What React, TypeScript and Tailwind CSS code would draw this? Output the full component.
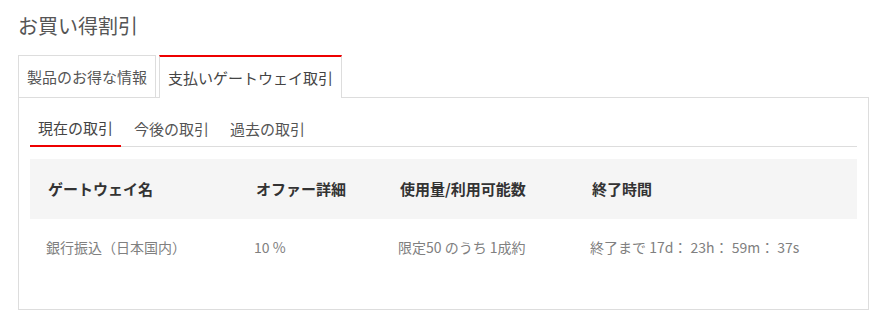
const font = { fontFamily: '"Noto Sans CJK JP", "Noto Sans", sans-serif' }

const columns = ['ゲートウェイ名', 'オファー詳細', '使用量/利用可能数', '終了時間']

const rows = [
  ['銀行振込（日本国内）', '10 %', '限定50 のうち 1成約', '終了まで 17d： 23h： 59m： 37s'],
]

export default function App() {
  return (
    <div className="h-[327px] w-[885px] bg-white pl-[18px] pr-[16px] pt-3" style={font}>
      {/* Page title */}
      <h1 className="text-[20px] leading-[28px] text-[#555]">お買い得割引</h1>

      {/* Outer tabs */}
      <div className="mt-[15px] flex">
        <button className="mr-[3px] h-[42px] border border-b-0 border-[#ddd] px-2 text-[15px] leading-[20px] text-[#555]">
          製品のお得な情報
        </button>
        <button className="relative -mb-px h-[43px] border border-t-2 border-b-0 border-[#ddd] border-t-[#e00] bg-white px-2 text-[15px] leading-[20px] text-[#444]">
          支払いゲートウェイ取引
        </button>
      </div>

      {/* Panel */}
      <div className="h-[213px] border border-[#ddd] px-[11px] pt-[13px]">
        {/* Inner tabs */}
        <div className="flex gap-[5px] border-b border-[#ddd]">
          <button className="-mb-px border-b-2 border-[#e00] px-2 py-[7px] text-[15px] leading-[20px] text-[#444]">
            現在の取引
          </button>
          <button className="-mb-px px-2 py-[7px] text-[15px] leading-[20px] text-[#555]">今後の取引</button>
          <button className="-mb-px px-2 py-[7px] text-[15px] leading-[20px] text-[#555]">過去の取引</button>
        </div>

        {/* Table */}
        <div className="mt-3">
          <div className="grid h-[60px] grid-cols-[208px_144px_192px_1fr] items-center bg-[#f5f5f5]">
            {columns.map((c) => (
              <div key={c} className="px-[18px] text-[15px] font-bold leading-[20px] text-[#333]">
                {c}
              </div>
            ))}
          </div>
          {rows.map((r, i) => (
            <div key={i} className="grid h-[56px] grid-cols-[208px_144px_192px_1fr] items-center">
              {r.map((v, j) => (
                <div key={j} className="px-4 text-[14px] leading-[20px] text-[#808080]">
                  {v}
                </div>
              ))}
            </div>
          ))}
        </div>
      </div>
    </div>
  )
}
